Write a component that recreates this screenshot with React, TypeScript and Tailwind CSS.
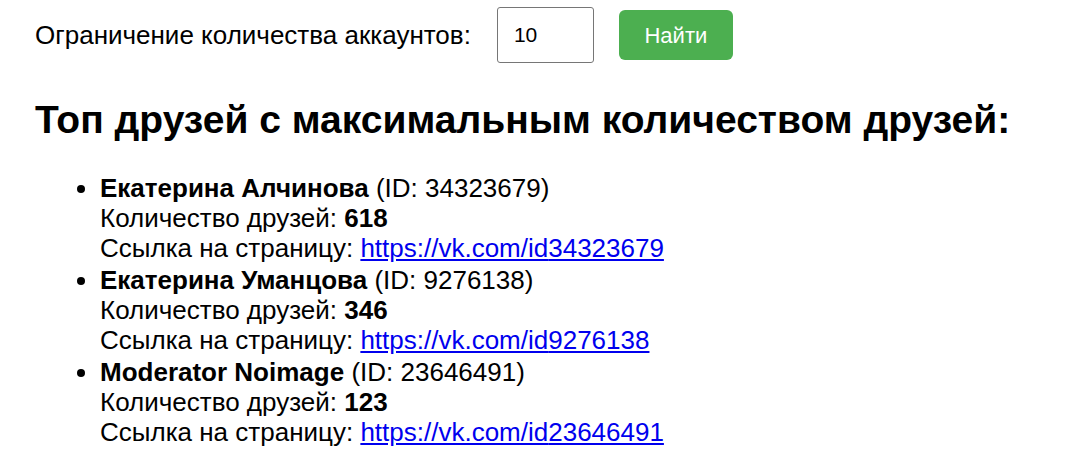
const friends = [
  { name: 'Екатерина Алчинова', id: '34323679', count: 618 },
  { name: 'Екатерина Уманцова', id: '9276138', count: 346 },
  { name: 'Moderator Noimage', id: '23646491', count: 123 },
];

export default function App() {
  return (
    <div className="min-h-screen bg-white px-[35px] pt-[7px] text-black font-['Liberation_Sans',Arial,sans-serif]">
      <div className="flex items-center">
        <label className="text-[26px]">Ограничение количества аккаунтов:</label>
        <input
          defaultValue="10"
          className="ml-[26px] h-[56px] w-[97px] rounded-[3px] border border-[#767676] px-[16px] text-[21px] outline-none"
        />
        <button className="ml-[25px] h-[50px] w-[114px] rounded-[6px] bg-[#4caf50] text-[22px] text-white">
          Найти
        </button>
      </div>

      <h2 className="mt-[35px] text-[39px] font-bold leading-[44px]">
        Топ друзей с максимальным количеством друзей:
      </h2>

      <ul className="mt-[31px] list-disc pl-[65px] text-[26px] leading-[30px]">
        {friends.map((f) => (
          <li key={f.id} className="mb-[2px]">
            <b>{f.name}</b> (ID: {f.id})
            <br />
            Количество друзей: <b>{f.count}</b>
            <br />
            Ссылка на страницу:{' '}
            <a href={`https://vk.com/id${f.id}`} className="text-[#0000ee] underline">
              https://vk.com/id{f.id}
            </a>
          </li>
        ))}
      </ul>
    </div>
  );
}
